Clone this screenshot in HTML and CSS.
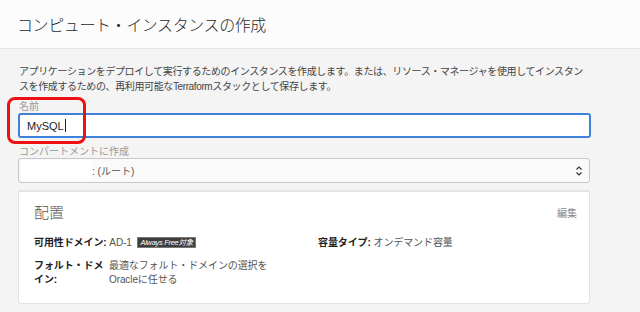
FILE: index.html
```html
<!DOCTYPE html>
<html lang="ja">
<head>
<meta charset="utf-8">
<title>コンピュート・インスタンスの作成</title>
<link rel="stylesheet" href="styles.css">
</head>
<body>
<header class="header">
  <h1 class="title">コンピュート・インスタンスの作成</h1>
</header>
<main class="content">
  <p class="desc">アプリケーションをデプロイして実行するためのインスタンスを作成します。または、リソース・マネージャを使用してインスタン<br>スを作成するための、再利用可能なTerraformスタックとして保存します。</p>

  <div class="field name-field">
    <label class="label" for="name">名前</label>
    <div class="input">MySQL<span class="caret"></span></div>
    <div class="highlight"></div>
  </div>

  <div class="field">
    <label class="label">コンパートメントに作成</label>
    <div class="select">
      <span class="redact"></span><span class="select-text">: (ルート)</span>
      <svg class="chev" width="8" height="12" viewBox="0 0 8 12"><path d="M1.5 4.5 L4 2 L6.5 4.5 M1.5 7.5 L4 10 L6.5 7.5" fill="none" stroke="#333" stroke-width="1.2"/></svg>
    </div>
  </div>

  <section class="card">
    <div class="card-head">
      <h2 class="card-title">配置</h2>
      <span class="edit">編集</span>
    </div>
    <div class="grid">
      <div class="col">
        <div class="row"><span class="key">可用性ドメイン:</span> <span class="val">AD-1</span> <span class="badge">Always Free対象</span></div>
        <div class="row split"><span class="key key-w">フォルト・ドメイン:</span><span class="val">最適なフォルト・ドメインの選択を<br>Oracleに任せる</span></div>
      </div>
      <div class="col">
        <div class="row"><span class="key">容量タイプ:</span> <span class="val">オンデマンド容量</span></div>
      </div>
    </div>
  </section>
</main>
</body>
</html>
```

FILE: styles.css
```css
* { box-sizing: border-box; }
body {
  margin: 0;
  background: #f4f4f4;
  font-family: "Liberation Sans", "Noto Sans CJK JP", sans-serif;
  color: #333;
}
.header {
  height: 49px;
  background: #fcfcfc;
  border-bottom: 1px solid #e6e6e6;
  display: flex;
  align-items: center;
  padding-left: 17px;
}
.title {
  margin: 0;
  font-size: 16px;
  letter-spacing: -0.4px;
  font-weight: 300;
  color: #2a2a2a;
}
.content {
  padding: 0 49px 0 18px;
}
.desc {
  margin: 15px 0 0 1px;
  font-size: 10px;
  line-height: 15px;
  letter-spacing: -0.38px;
  color: #444;
}
.field { position: relative; }
.label {
  display: block;
  margin-top: 6px;
  padding-left: 1px;
  font-size: 10px;
  line-height: 13px;
  color: #999;
}
.field + .field .label { margin-top: 7px; }
.input {
  height: 25px;
  border: 2px solid #3d82d8;
  border-radius: 3px;
  background: #fff;
  padding-left: 7px;
  display: flex;
  align-items: center;
  font-size: 11px;
  color: #222;
}
.caret {
  display: inline-block;
  width: 1px;
  height: 13px;
  background: #222;
  margin-left: 1px;
}
.highlight {
  position: absolute;
  left: -11px;
  top: -3px;
  width: 79px;
  height: 47px;
  border: 3px solid #ee1111;
  border-radius: 8px;
}
.select {
  height: 25px;
  margin-right: 1px;
  border: 1px solid #c8c8c8;
  border-radius: 3px;
  background: #fafafa;
  display: flex;
  align-items: center;
  padding: 0 6px 0 2px;
  font-size: 10px;
  color: #555;
}
.redact {
  width: 71px;
  height: 21px;
  background: #fff;
}
.select-text { flex: 1; }
.chev { display: block; }
.card {
  margin: 7px 1px 0 0;
  background: #fff;
  border: 1px solid #e2e2e2;
  border-top: 2px solid #e4e4e8;
  border-radius: 3px;
  padding: 10px 12px 16px 15px;
  height: 114px;
}
.card-head {
  display: flex;
  justify-content: space-between;
  align-items: center;
}
.card-title {
  margin: 0;
  font-size: 15px;
  line-height: 21px;
  font-weight: 300;
  color: #555;
}
.edit {
  font-size: 10px;
  color: #888;
}
.grid {
  display: grid;
  grid-template-columns: 284px 1fr;
  margin-top: 13px;
}
.row {
  font-size: 10px;
  line-height: 14px;
  color: #555;
}
.row + .row { margin-top: 9px; }
.key { font-weight: 700; color: #222; letter-spacing: -0.1px; }
.split { display: flex; }
.key-w { width: 75px; flex: none; }
.val { letter-spacing: -0.1px; }
.badge {
  display: inline-block;
  margin-left: 3px;
  background: #3e3e3e;
  border: 1px solid #777;
  color: #fff;
  font-size: 7.5px;
  font-style: italic;
  line-height: 9px;
  letter-spacing: -0.3px;
  padding: 0 2px;
  vertical-align: 1px;
}
```
